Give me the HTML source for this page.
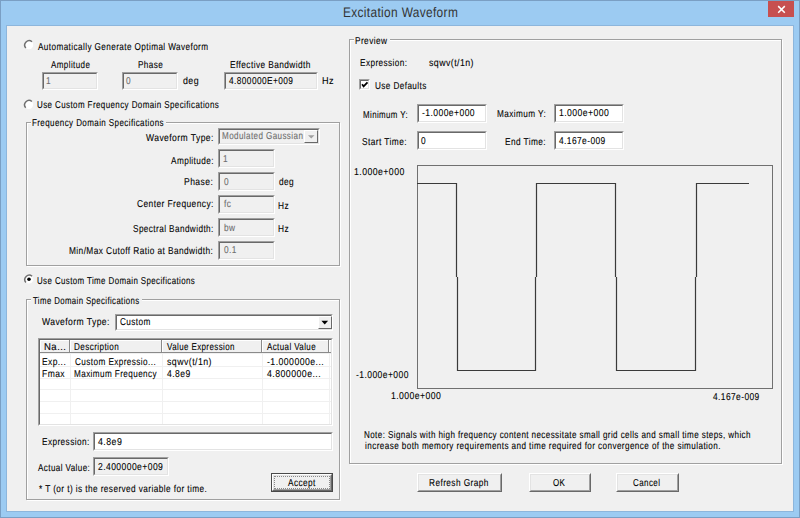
<!DOCTYPE html>
<html><head><meta charset="utf-8"><style>
html,body{margin:0;padding:0;}
body{width:800px;height:518px;position:relative;overflow:hidden;background:#9ccbf2;font-family:"Liberation Sans",sans-serif;}
div,svg{box-sizing:border-box;}
.frame{position:absolute;left:0;top:0;width:800px;height:518px;border:1px solid #7a9fc4;}
.content{position:absolute;left:6px;top:25px;width:788px;height:487px;border:1px solid #8db6dc;background:#f0f0f0;}
.ab{position:absolute;}
.t{position:absolute;font-size:10px;line-height:10px;white-space:nowrap;transform-origin:0 0;-webkit-text-stroke:0.1px currentColor;letter-spacing:0.5px;text-rendering:geometricPrecision;}
.ed{position:absolute;border-top:1px solid #a0a0a0;border-left:1px solid #a0a0a0;border-right:1px solid #fff;border-bottom:1px solid #fff;}
.ed::before{content:"";position:absolute;left:0;top:0;right:0;bottom:0;border-top:1px solid #696969;border-left:1px solid #696969;border-right:1px solid #e3e3e3;border-bottom:1px solid #e3e3e3;}
.gg{position:absolute;border:1px solid #a0a0a0;}
.gw{position:absolute;border:1px solid #fff;}
.btn{position:absolute;background:#f0f0f0;border-top:1px solid #fff;border-left:1px solid #fff;border-right:1px solid #696969;border-bottom:1px solid #696969;}
.btn::before{content:"";position:absolute;left:0;top:0;right:0;bottom:0;border-right:1px solid #a0a0a0;border-bottom:1px solid #a0a0a0;border-top:1px solid #e3e3e3;border-left:1px solid #e3e3e3;}
.btnd{position:absolute;border:1px solid #4a4a4a;}
.focus{position:absolute;border:1px dotted #8a8a8a;}
.cbb{position:absolute;background:#f0f0f0;border-top:1px solid #fff;border-left:1px solid #fff;border-right:1px solid #696969;border-bottom:1px solid #696969;}
.lv{position:absolute;background:#fff;border-top:1px solid #a0a0a0;border-left:1px solid #a0a0a0;border-right:1px solid #fff;border-bottom:1px solid #fff;}
.lv::before{content:"";position:absolute;left:0;top:0;right:0;bottom:0;border-top:1px solid #696969;border-left:1px solid #696969;border-right:1px solid #e3e3e3;border-bottom:1px solid #e3e3e3;}
.chk{position:absolute;background:#fff;border-top:1px solid #7a7a7a;border-left:1px solid #7a7a7a;border-right:1px solid #fff;border-bottom:1px solid #fff;}
.title{position:absolute;left:343px;top:4px;font-size:14px;line-height:16px;color:#333;white-space:nowrap;letter-spacing:0.4px;text-rendering:geometricPrecision;transform:scaleX(0.85);transform-origin:0 0;}
.close{position:absolute;left:768px;top:1px;width:26px;height:16px;background:#c75050;}
</style></head><body>
<div class="frame"></div>
<div class="title">Excitation Waveform</div>
<div class="close"><svg width="26" height="16" viewBox="0 0 26 16" style="position:absolute;left:0;top:0"><path d="M10.2 5.1 L16.8 11.7 M16.8 5.1 L10.2 11.7" stroke="#fff" stroke-width="1.5"/></svg></div>
<div class="content"></div>
<svg class="ab" style="left:21px;top:37px" width="15" height="15"><circle cx="7.899999999999999" cy="7.899999999999999" r="4.3" fill="#fff"/><path d="M4.80 11.00 A4.4 4.4 0 0 1 11.00 4.80" stroke="#707070" stroke-width="1.5" fill="none"/></svg>
<div class="t" style="left:37.80px;top:43px;transform:scaleX(0.8168);color:#000;">Automatically Generate Optimal Waveform</div>
<div class="t" style="left:50.75px;top:61px;transform:scaleX(0.8021);color:#000;">Amplitude</div>
<div class="t" style="left:137.93px;top:61px;transform:scaleX(0.8190);color:#000;">Phase</div>
<div class="t" style="left:229.77px;top:61px;transform:scaleX(0.8326);color:#000;">Effective Bandwidth</div>
<div class="ed" style="left:42px;top:72px;width:56px;height:18px;background:#f0f0f0"></div>
<div class="t" style="left:46.17px;top:77px;transform:scaleX(0.8300);color:#6d6d6d;">1</div>
<div class="ed" style="left:122px;top:72px;width:56px;height:18px;background:#f0f0f0"></div>
<div class="t" style="left:126.00px;top:77px;transform:scaleX(0.8300);color:#6d6d6d;">0</div>
<div class="t" style="left:183.00px;top:77px;transform:scaleX(0.8824);color:#000;">deg</div>
<div class="ed" style="left:224px;top:72px;width:94px;height:18px;background:#f0f0f0"></div>
<div class="t" style="left:229.00px;top:77px;transform:scaleX(0.8312);color:#000;">4.800000E+009</div>
<div class="t" style="left:321.89px;top:77px;transform:scaleX(0.9091);color:#000;">Hz</div>
<svg class="ab" style="left:21px;top:97px" width="15" height="15"><circle cx="7.800000000000001" cy="7.599999999999994" r="4.3" fill="#fff"/><path d="M4.70 10.70 A4.4 4.4 0 0 1 10.90 4.50" stroke="#707070" stroke-width="1.5" fill="none"/></svg>
<div class="t" style="left:37.20px;top:101px;transform:scaleX(0.7998);color:#000;">Use Custom Frequency Domain Specifications</div>
<div class="gw" style="left:27px;top:123px;width:314px;height:144px"></div>
<div class="gg" style="left:26px;top:122px;width:314px;height:144px"></div>
<div class="ab" style="left:31px;top:116px;width:135px;height:12px;background:#f0f0f0"></div>
<div class="t" style="left:32.20px;top:119px;transform:scaleX(0.8021);color:#000;">Frequency Domain Specifications</div>
<div class="t" style="left:145.75px;top:134px;transform:scaleX(0.8558);color:#000;">Waveform Type:</div>
<div class="ed" style="left:218px;top:128px;width:102px;height:17px;background:#f0f0f0"></div>
<div class="t" style="left:222.09px;top:132px;transform:scaleX(0.8071);color:#6d6d6d;">Modulated Gaussian</div>
<div class="cbb" style="left:304px;top:130px;width:14px;height:13px"><svg width="12" height="11" style="position:absolute;left:0;top:0"><path d="M3 4.2 L9.5 4.2 L6.25 7.5 Z" fill="#a0a0a0"/></svg></div>
<div class="t" style="left:170.60px;top:157px;transform:scaleX(0.8216);color:#000;">Amplitude:</div>
<div class="ed" style="left:218px;top:149px;width:57px;height:19px;background:#f0f0f0"></div>
<div class="t" style="left:223.17px;top:155px;transform:scaleX(0.8300);color:#6d6d6d;">1</div>
<div class="t" style="left:184.24px;top:178px;transform:scaleX(0.8563);color:#000;">Phase:</div>
<div class="ed" style="left:218px;top:172px;width:57px;height:19px;background:#f0f0f0"></div>
<div class="t" style="left:224.00px;top:178px;transform:scaleX(0.8300);color:#6d6d6d;">0</div>
<div class="t" style="left:278.60px;top:178px;transform:scaleX(0.8300);color:#000;">deg</div>
<div class="t" style="left:136.80px;top:200px;transform:scaleX(0.8411);color:#000;">Center Frequency:</div>
<div class="ed" style="left:218px;top:195px;width:57px;height:19px;background:#f0f0f0"></div>
<div class="t" style="left:224.00px;top:200px;transform:scaleX(0.8300);color:#6d6d6d;">fc</div>
<div class="t" style="left:277.77px;top:202px;transform:scaleX(0.8300);color:#000;">Hz</div>
<div class="t" style="left:132.93px;top:225px;transform:scaleX(0.8203);color:#000;">Spectral Bandwidth:</div>
<div class="ed" style="left:218px;top:218px;width:57px;height:19px;background:#f0f0f0"></div>
<div class="t" style="left:224.00px;top:224px;transform:scaleX(0.8300);color:#6d6d6d;">bw</div>
<div class="t" style="left:277.77px;top:225px;transform:scaleX(0.8300);color:#000;">Hz</div>
<div class="t" style="left:69.47px;top:247px;transform:scaleX(0.8316);color:#000;">Min/Max Cutoff Ratio at Bandwidth:</div>
<div class="ed" style="left:218px;top:241px;width:57px;height:19px;background:#f0f0f0"></div>
<div class="t" style="left:224.00px;top:246px;transform:scaleX(0.8300);color:#6d6d6d;">0.1</div>
<svg class="ab" style="left:22px;top:272px" width="15" height="15"><circle cx="7.0" cy="7.300000000000011" r="4.3" fill="#fff"/><path d="M3.90 10.40 A4.4 4.4 0 0 1 10.10 4.20" stroke="#707070" stroke-width="1.5" fill="none"/><circle cx="7.0" cy="7.300000000000011" r="1.8" fill="#000"/></svg>
<div class="t" style="left:36.81px;top:277px;transform:scaleX(0.7924);color:#000;">Use Custom Time Domain Specifications</div>
<div class="gw" style="left:27px;top:300px;width:314px;height:201px"></div>
<div class="gg" style="left:26px;top:299px;width:314px;height:201px"></div>
<div class="ab" style="left:31px;top:293px;width:111px;height:12px;background:#f0f0f0"></div>
<div class="t" style="left:33.20px;top:297px;transform:scaleX(0.7801);color:#000;">Time Domain Specifications</div>
<div class="t" style="left:41.70px;top:318px;transform:scaleX(0.8564);color:#000;">Waveform Type:</div>
<div class="ed" style="left:115px;top:314px;width:218px;height:17px;background:#fff"></div>
<div class="t" style="left:120.40px;top:318px;transform:scaleX(0.8222);color:#000;">Custom</div>
<div class="cbb" style="left:318px;top:316px;width:14px;height:13px"><svg width="12" height="11" style="position:absolute;left:0;top:0"><path d="M2.4 3.8 H9.1 L5.75 7.5 Z" fill="#000"/></svg></div>
<div class="lv" style="left:38px;top:338px;width:295px;height:88px"></div>
<div class="ab" style="left:40px;top:340px;width:291px;height:14px;background:#f0f0f0"></div>
<div class="ab" style="left:40px;top:352px;width:291px;height:1px;background:#8a8a8a"></div>
<div class="ab" style="left:40px;top:340px;width:291px;height:1px;background:#fff"></div>
<div class="ab" style="left:69px;top:340px;width:1px;height:12px;background:#8a8a8a"></div>
<div class="ab" style="left:70px;top:340px;width:1px;height:12px;background:#fff"></div>
<div class="ab" style="left:161px;top:340px;width:1px;height:12px;background:#8a8a8a"></div>
<div class="ab" style="left:162px;top:340px;width:1px;height:12px;background:#fff"></div>
<div class="ab" style="left:261px;top:340px;width:1px;height:12px;background:#8a8a8a"></div>
<div class="ab" style="left:262px;top:340px;width:1px;height:12px;background:#fff"></div>
<div class="ab" style="left:328px;top:340px;width:1px;height:12px;background:#8a8a8a"></div>
<div class="ab" style="left:329px;top:340px;width:1px;height:12px;background:#fff"></div>
<div class="ab" style="left:40px;top:340px;width:1px;height:12px;background:#fff"></div>
<div class="t" style="left:43.75px;top:343px;transform:scaleX(0.9524);color:#000;">Na...</div>
<div class="t" style="left:74.49px;top:343px;transform:scaleX(0.8130);color:#000;">Description</div>
<div class="t" style="left:167.00px;top:343px;transform:scaleX(0.7976);color:#000;">Value Expression</div>
<div class="t" style="left:267.20px;top:343px;transform:scaleX(0.7984);color:#000;">Actual Value</div>
<div class="ab" style="left:40px;top:366px;width:291px;height:1px;background:#f0f0f0"></div>
<div class="ab" style="left:40px;top:378px;width:291px;height:1px;background:#f0f0f0"></div>
<div class="ab" style="left:40px;top:389px;width:291px;height:1px;background:#f0f0f0"></div>
<div class="ab" style="left:40px;top:401px;width:291px;height:1px;background:#f0f0f0"></div>
<div class="ab" style="left:40px;top:413px;width:291px;height:1px;background:#f0f0f0"></div>
<div class="ab" style="left:70px;top:353px;width:1px;height:71px;background:#f0f0f0"></div>
<div class="ab" style="left:162px;top:353px;width:1px;height:71px;background:#f0f0f0"></div>
<div class="ab" style="left:262px;top:353px;width:1px;height:71px;background:#f0f0f0"></div>
<div class="ab" style="left:329px;top:353px;width:1px;height:71px;background:#f0f0f0"></div>
<div class="t" style="left:41.85px;top:358px;transform:scaleX(0.8462);color:#000;">Exp...</div>
<div class="t" style="left:75.30px;top:358px;transform:scaleX(0.8194);color:#000;">Custom Expressio...</div>
<div class="t" style="left:167.00px;top:358px;transform:scaleX(0.8800);color:#000;">sqwv(t/1n)</div>
<div class="t" style="left:267.20px;top:358px;transform:scaleX(0.8734);color:#000;">-1.000000e...</div>
<div class="t" style="left:41.85px;top:370px;transform:scaleX(0.8520);color:#000;">Fmax</div>
<div class="t" style="left:74.48px;top:370px;transform:scaleX(0.8150);color:#000;">Maximum Frequency</div>
<div class="t" style="left:167.00px;top:370px;transform:scaleX(0.8593);color:#000;">4.8e9</div>
<div class="t" style="left:267.20px;top:370px;transform:scaleX(0.8783);color:#000;">4.800000e...</div>
<div class="t" style="left:41.77px;top:438px;transform:scaleX(0.8250);color:#000;">Expression:</div>
<div class="ed" style="left:93px;top:432px;width:240px;height:19px;background:#fff"></div>
<div class="t" style="left:98.00px;top:438px;transform:scaleX(0.8796);color:#000;">4.8e9</div>
<div class="t" style="left:38.10px;top:464px;transform:scaleX(0.8078);color:#000;">Actual Value:</div>
<div class="ed" style="left:93px;top:457px;width:76px;height:19px;background:#f0f0f0"></div>
<div class="t" style="left:98.00px;top:463px;transform:scaleX(0.8553);color:#000;">2.400000e+009</div>
<div class="t" style="left:38.75px;top:485px;transform:scaleX(0.8251);color:#000;">* T (or t) is the reserved variable for time.</div>
<div class="btnd" style="left:271px;top:473px;width:62px;height:19px"><div class="btn" style="left:0;top:0;width:60px;height:17px"></div></div>
<div class="focus" style="left:274px;top:476px;width:56px;height:13px"></div>
<div class="t" style="left:288.20px;top:479px;transform:scaleX(0.8273);color:#000;">Accept</div>
<div class="gw" style="left:350px;top:40px;width:433px;height:425px"></div>
<div class="gg" style="left:349px;top:39px;width:433px;height:425px"></div>
<div class="ab" style="left:354px;top:33px;width:36px;height:12px;background:#f0f0f0"></div>
<div class="t" style="left:355.27px;top:37px;transform:scaleX(0.8289);color:#000;">Preview</div>
<div class="t" style="left:359.68px;top:59px;transform:scaleX(0.8214);color:#000;">Expression:</div>
<div class="t" style="left:429.00px;top:59px;transform:scaleX(0.8800);color:#000;">sqwv(t/1n)</div>
<div class="ed" style="left:359px;top:79px;width:11px;height:11px;background:#fff"></div>
<svg class="ab" style="left:359px;top:79px" width="11" height="11"><path d="M3.1 5.3 L4.6 7.4 L8.5 3.3" stroke="#000" stroke-width="1.8" fill="none"/></svg>
<div class="t" style="left:375.28px;top:82px;transform:scaleX(0.8177);color:#000;">Use Defaults</div>
<div class="t" style="left:363.01px;top:111px;transform:scaleX(0.7909);color:#000;">Minimum Y:</div>
<div class="ed" style="left:417px;top:104px;width:70px;height:19px;background:#fff"></div>
<div class="t" style="left:422.10px;top:109px;transform:scaleX(0.8557);color:#000;">-1.000e+000</div>
<div class="t" style="left:496.78px;top:110px;transform:scaleX(0.8207);color:#000;">Maximum Y:</div>
<div class="ed" style="left:554px;top:104px;width:70px;height:19px;background:#fff"></div>
<div class="t" style="left:559.13px;top:109px;transform:scaleX(0.8661);color:#000;">1.000e+000</div>
<div class="t" style="left:362.27px;top:138px;transform:scaleX(0.8346);color:#000;">Start Time:</div>
<div class="ed" style="left:417px;top:131px;width:70px;height:19px;background:#fff"></div>
<div class="t" style="left:421.20px;top:137px;transform:scaleX(0.8300);color:#000;">0</div>
<div class="t" style="left:505.47px;top:138px;transform:scaleX(0.8277);color:#000;">End Time:</div>
<div class="ed" style="left:554px;top:131px;width:70px;height:19px;background:#fff"></div>
<div class="t" style="left:559.10px;top:137px;transform:scaleX(0.8400);color:#000;">4.167e-009</div>
<svg class="ab" style="left:0;top:0" width="800" height="518"><rect x="417.5" y="165.5" width="355" height="223" fill="none" stroke="#707070" stroke-width="1"/><path d="M417 183.5 H457 M456.5 183 V277 M457.5 277 V371 M457 370.5 H536 M535.5 371 V277 M536.5 277 V183 M536 183.5 H616 M615.5 183 V277 M616.5 277 V371 M616 370.5 H696 M695.5 371 V277 M696.5 277 V183 M696 183.5 H749" fill="none" stroke="#3a3a3a" stroke-width="1.2"/></svg>
<div class="t" style="left:353.73px;top:168px;transform:scaleX(0.8732);color:#000;">1.000e+000</div>
<div class="t" style="left:356.30px;top:371px;transform:scaleX(0.8525);color:#000;">-1.000e+000</div>
<div class="t" style="left:390.53px;top:392px;transform:scaleX(0.8661);color:#000;">1.000e+000</div>
<div class="t" style="left:713.20px;top:393px;transform:scaleX(0.8400);color:#000;">4.167e-009</div>
<div class="t" style="left:364.29px;top:431px;transform:scaleX(0.8065);color:#000;">Note: Signals with high frequency content necessitate small grid cells and small time steps, which</div>
<div class="t" style="left:365.10px;top:442px;transform:scaleX(0.8152);color:#000;">increase both memory requirements and time required for convergence of the simulation.</div>
<div class="btn" style="left:417px;top:473px;width:85px;height:19px"></div>
<div class="t" style="left:428.67px;top:479px;transform:scaleX(0.8286);color:#000;">Refresh Graph</div>
<div class="btn" style="left:529px;top:473px;width:62px;height:19px"></div>
<div class="t" style="left:552.80px;top:479px;transform:scaleX(0.8000);color:#000;">OK</div>
<div class="btn" style="left:616px;top:473px;width:63px;height:19px"></div>
<div class="t" style="left:632.80px;top:479px;transform:scaleX(0.8000);color:#000;">Cancel</div>
</body></html>
